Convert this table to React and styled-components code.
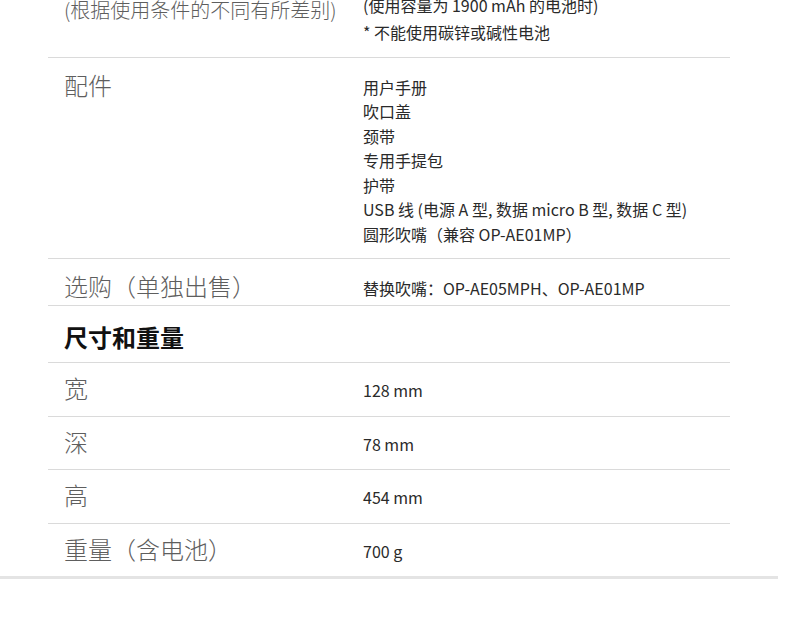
import React from "react";
import styled, { createGlobalStyle } from "styled-components";

const GlobalStyle = createGlobalStyle`
  body {
    margin: 0;
    background: #fff;
    font-family: "Noto Sans CJK SC", "Noto Sans", sans-serif;
  }
`;

const SpecSection = styled.section`
  box-sizing: border-box;
  width: 778px;
  margin-top: -24px;
  padding: 0 48px;
  border-bottom: 3px solid #e4e4e4;
`;

const Row = styled.div`
  display: grid;
  grid-template-columns: 299px 1fr;
  padding: ${(p) => p.$pt ?? 12}px 16px ${(p) => p.$pb ?? 12}px;
  border-bottom: 1px solid #dadada;

  &:last-child {
    border-bottom: none;
  }
`;

const Label = styled.div`
  margin-top: ${(p) => p.$shift || 0}px;
  font-size: ${(p) => p.$size || 24}px;
  line-height: 30px;
  font-weight: 300;
  white-space: nowrap;
  color: #5e5e5e;
`;

const Values = styled.div`
  padding-top: 5px;
  font-size: 16px;
  line-height: 24.5px;
  color: #2a2a2a;
`;

const Line = styled.div``;

const Note = styled.div`
  margin-top: 2.6px;
`;

const Heading = styled.h2`
  margin: 0;
  padding: 15px 16px 9px;
  font-size: 24px;
  line-height: 32px;
  font-weight: 700;
  color: #111;
  border-bottom: 1px solid #dadada;
`;

const accessories = [
  "用户手册",
  "吹口盖",
  "颈带",
  "专用手提包",
  "护带",
  "USB 线 (电源 A 型, 数据 micro B 型, 数据 C 型)",
  "圆形吹嘴（兼容 OP-AE01MP）",
];

const dimensions = [
  ["宽", "128 mm"],
  ["深", "78 mm"],
  ["高", "454 mm"],
  ["重量（含电池）", "700 g"],
];

export default function App() {
  return (
    <>
      <GlobalStyle />
      <SpecSection>
        <Row>
          <Label $shift={7} $size={20}>(根据使用条件的不同有所差别)</Label>
          <Values>
            <Line>(使用容量为 1900 mAh 的电池时)</Line>
            <Note>* 不能使用碳锌或碱性电池</Note>
          </Values>
        </Row>
        <Row>
          <Label>配件</Label>
          <Values>
            {accessories.map((item) => (
              <Line key={item}>{item}</Line>
            ))}
          </Values>
        </Row>
        <Row $pb={4}>
          <Label>选购（单独出售）</Label>
          <Values>
            <Line>替换吹嘴：OP-AE05MPH、OP-AE01MP</Line>
          </Values>
        </Row>
        <Heading>尺寸和重量</Heading>
        {dimensions.map(([label, value]) => (
          <Row key={label} $pt={10} $pb={12.6}>
            <Label>{label}</Label>
            <Values>
              <Line>{value}</Line>
            </Values>
          </Row>
        ))}
      </SpecSection>
    </>
  );
}
